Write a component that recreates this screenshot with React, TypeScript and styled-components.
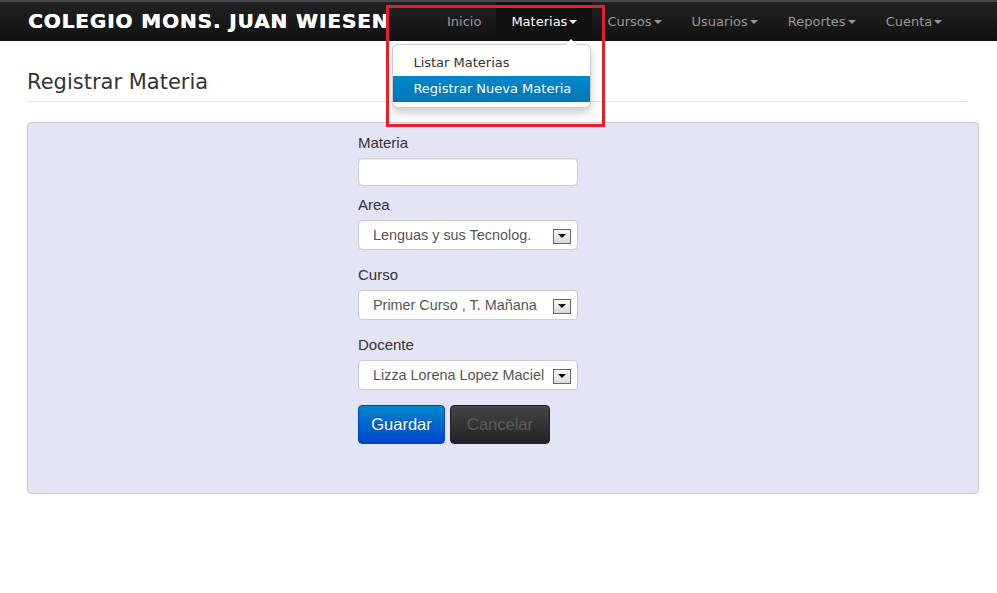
import React from 'react';
import styled, { createGlobalStyle } from 'styled-components';

const GlobalStyle = createGlobalStyle`
  html, body {
    margin: 0;
    padding: 0;
    background: #fff;
    font-family: "DejaVu Sans", Verdana, sans-serif;
    color: #333;
  }
  * { box-sizing: border-box; }
`;

const Page = styled.div`
  position: relative;
  width: 997px;
  min-height: 593px;
`;

const Navbar = styled.div`
  display: flex;
  align-items: stretch;
  height: 41px;
  padding-left: 28px;
  border-top: 2px solid #4a4a4a;
  background: linear-gradient(to bottom, #222 0%, #111 100%);
`;

const Brand = styled.div`
  width: 404px;
  white-space: nowrap;
  color: #fff;
  font-family: "DejaVu Sans", Verdana, sans-serif;
  font-weight: bold;
  font-size: 20px;
  letter-spacing: 0.9px;
  line-height: 39px;
  text-shadow: 0.4px 0 0 #fff;
`;

const Nav = styled.ul`
  display: flex;
  margin: 0;
  padding: 0;
  list-style: none;
`;

const NavItem = styled.li<{ $active?: boolean }>`
  position: relative;
  display: flex;
  align-items: center;
  padding: 0 15px;
  font-size: 13px;
  color: ${(p) => (p.$active ? '#fff' : '#999')};
  background: ${(p) => (p.$active ? '#111' : 'transparent')};
`;

const Caret = styled.span<{ $active?: boolean }>`
  display: inline-block;
  margin-left: 2px;
  margin-top: 1px;
  width: 0;
  height: 0;
  border-left: 4px solid transparent;
  border-right: 4px solid transparent;
  border-top: 4px solid ${(p) => (p.$active ? '#fff' : '#999')};
`;

const Menu = styled.div`
  position: absolute;
  top: 42px;
  right: 1px;
  width: 199px;
  padding: 5px 0;
  background: #fff;
  border: 1px solid rgba(0, 0, 0, 0.2);
  border-radius: 6px;
  box-shadow: 0 5px 10px rgba(0, 0, 0, 0.2);
  z-index: 5;

  &::before {
    content: '';
    position: absolute;
    top: -7px;
    right: 12px;
    border-left: 7px solid transparent;
    border-right: 7px solid transparent;
    border-bottom: 7px solid rgba(0, 0, 0, 0.2);
  }
  &::after {
    content: '';
    position: absolute;
    top: -6px;
    right: 13px;
    border-left: 6px solid transparent;
    border-right: 6px solid transparent;
    border-bottom: 6px solid #fff;
  }
`;

const MenuItem = styled.div<{ $selected?: boolean }>`
  padding: 3px 20px;
  line-height: 20px;
  font-size: 13px;
  white-space: nowrap;
  color: ${(p) => (p.$selected ? '#fff' : '#333')};
  background: ${(p) =>
    p.$selected ? 'linear-gradient(to bottom, #0088cc, #0077b3)' : 'transparent'};
`;

const Container = styled.div`
  padding-left: 27px;
`;

const Header = styled.div`
  width: 940px;
  margin-top: 26px;
  padding-bottom: 4px;
  border-bottom: 1px solid #e5e5e5;
`;

const Title = styled.h1`
  margin: 0;
  font-size: 21px;
  font-weight: normal;
  line-height: 30px;
  color: #333;
`;

const Panel = styled.div`
  width: 952px;
  margin-top: 20px;
  padding: 10px 0 49px 330px;
  background: #e4e4f7;
  border: 1px solid #ccc;
  border-radius: 4px;
`;

const Label = styled.label`
  display: block;
  font-family: "Liberation Sans", Arial, sans-serif;
  font-size: 15px;
  line-height: 20px;
  color: #333;
  margin-bottom: 5px;
`;

const Field = styled.div<{ $gap: number }>`
  margin-bottom: ${(p) => p.$gap}px;
`;

const TextInput = styled.input`
  display: block;
  width: 220px;
  height: 28px;
  margin-top: 1px;
  border: 1px solid #ccc;
  border-radius: 4px;
  background: #fff;
  box-shadow: inset 0 1px 1px rgba(0, 0, 0, 0.075);
  outline: none;
`;

const Select = styled.div`
  display: flex;
  align-items: center;
  width: 220px;
  height: 30px;
  padding: 0 6px 0 14px;
  border: 1px solid #ccc;
  border-radius: 4px;
  background: #fff;
  font-family: "Liberation Sans", Arial, sans-serif;
  font-size: 14.4px;
  color: #555;
`;

const SelectText = styled.span`
  flex: 1;
  white-space: nowrap;
  overflow: hidden;
`;

const SelectButton = styled.span`
  display: flex;
  align-items: center;
  justify-content: center;
  width: 18px;
  height: 15px;
  margin-top: 2px;
  border: 1px solid #666;
  background: linear-gradient(to bottom, #fafafa, #d8d8d8);

  &::after {
    content: '';
    border-left: 4px solid transparent;
    border-right: 4px solid transparent;
    border-top: 4px solid #000;
  }
`;

const Actions = styled.div`
  display: flex;
  gap: 5px;
`;

const Button = styled.button<{ $variant: 'primary' | 'inverse' }>`
  height: 39px;
  width: ${(p) => (p.$variant === 'primary' ? 87 : 100)}px;
  padding: 0;
  border-radius: 4px;
  font-family: "Liberation Sans", Arial, sans-serif;
  font-size: 16.5px;
  cursor: pointer;
  ${(p) =>
    p.$variant === 'primary'
      ? `
    color: #fff;
    background: linear-gradient(to bottom, #0088cc, #0044cc);
    border: 1px solid #0044bb;
    text-shadow: 0 -1px 0 rgba(0,0,0,0.25);
  `
      : `
    color: #5c5c5c;
    background: linear-gradient(to bottom, #444, #222);
    border: 1px solid #222;
  `}
`;

const Annotation = styled.div`
  position: absolute;
  left: 386px;
  top: 5px;
  width: 219px;
  height: 122px;
  border: 3px solid #e3202b;
  z-index: 10;
  pointer-events: none;
`;

const navItems = [
  { name: 'Inicio', caret: false },
  { name: 'Materias', caret: true, active: true },
  { name: 'Cursos', caret: true },
  { name: 'Usuarios', caret: true },
  { name: 'Reportes', caret: true },
  { name: 'Cuenta', caret: true },
];

const selects = [
  { label: 'Area', value: 'Lenguas y sus Tecnolog.' },
  { label: 'Curso', value: 'Primer Curso , T. Mañana' },
  { label: 'Docente', value: 'Lizza Lorena Lopez Maciel' },
];

export default function App() {
  return (
    <Page>
      <GlobalStyle />
      <Navbar>
        <Brand>COLEGIO MONS. JUAN WIESEN</Brand>
        <Nav>
          {navItems.map((item) => (
            <NavItem key={item.name} $active={item.active}>
              {item.name}
              {item.caret && <Caret $active={item.active} />}
              {item.active && (
                <Menu>
                  <MenuItem>Listar Materias</MenuItem>
                  <MenuItem $selected>Registrar Nueva Materia</MenuItem>
                </Menu>
              )}
            </NavItem>
          ))}
        </Nav>
      </Navbar>

      <Container>
        <Header>
          <Title>Registrar Materia</Title>
        </Header>

        <Panel>
          <Field $gap={9}>
            <Label>Materia</Label>
            <TextInput type="text" />
          </Field>
          {selects.map((s) => (
            <Field key={s.label} $gap={15}>
              <Label>{s.label}</Label>
              <Select>
                <SelectText>{s.value}</SelectText>
                <SelectButton />
              </Select>
            </Field>
          ))}
          <Actions>
            <Button $variant="primary">Guardar</Button>
            <Button $variant="inverse">Cancelar</Button>
          </Actions>
        </Panel>
      </Container>

      <Annotation />
    </Page>
  );
}
